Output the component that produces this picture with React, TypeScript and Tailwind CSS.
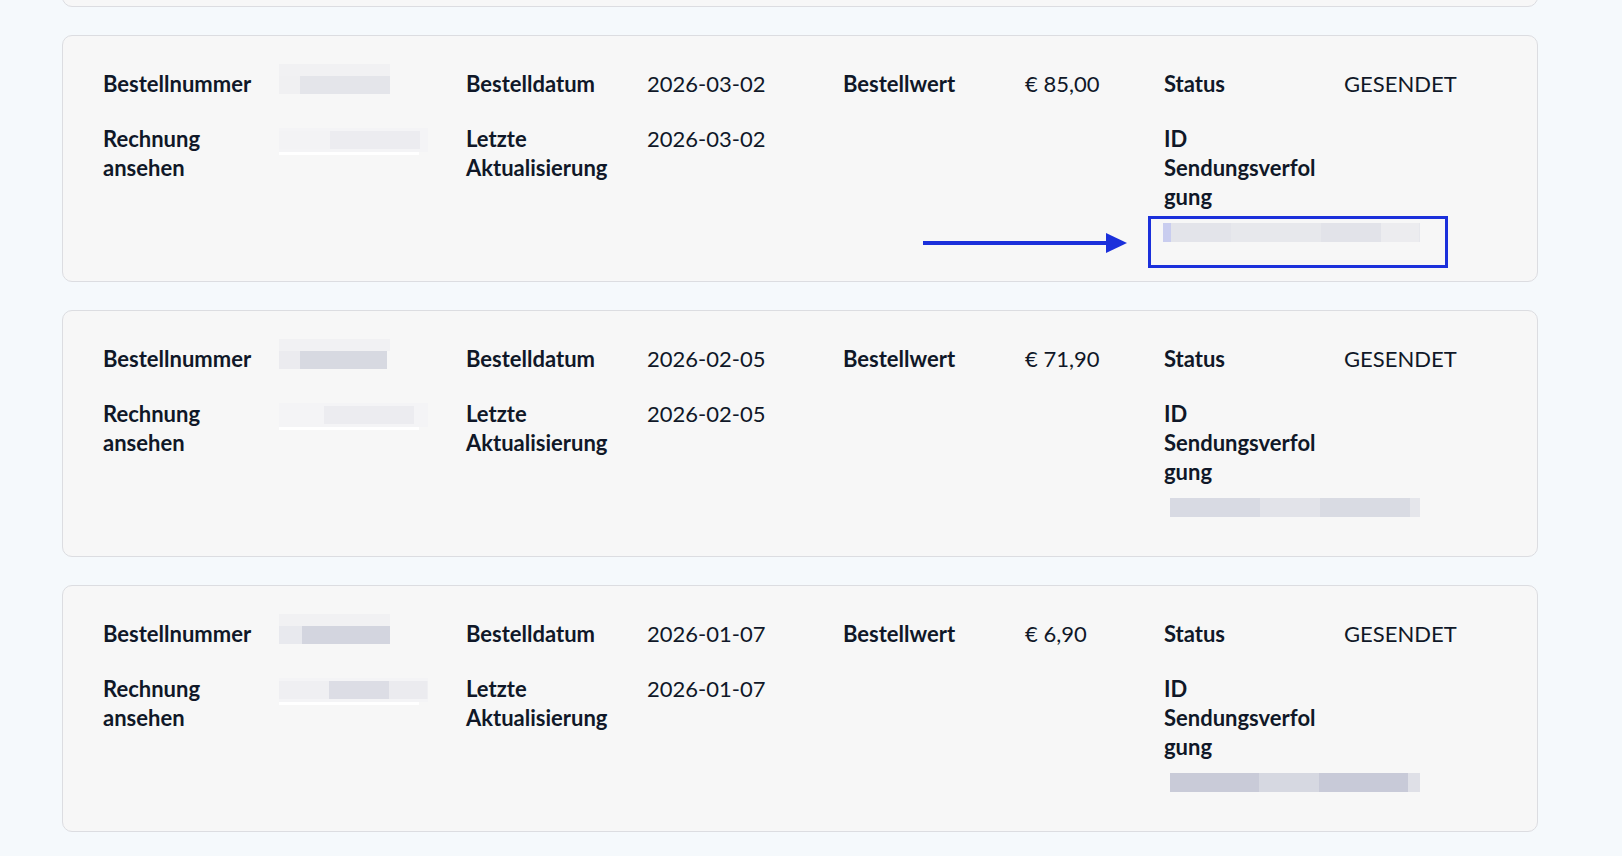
import React from 'react';

type Seg = { w: number; c: string };

type Order = {
  date: string;
  total: string;
  status: string;
  idSegs: Seg[];
  invSegs: Seg[];
  invBase: string;
  trackSegs: Seg[];
  highlight?: boolean;
};

const orders: Order[] = [
  {
    date: '2026-04-01',
    total: '€ 19,90',
    status: 'GESENDET',
    idSegs: [{ w: 21, c: '#efeff2' }, { w: 90, c: '#e4e5ea' }],
    invBase: '#f2f2f4',
    invSegs: [{ w: 51, c: '#f2f2f4' }, { w: 90, c: '#ebebef' }],
    trackSegs: [{ w: 250, c: '#e3e4ea' }],
  },
  {
    date: '2026-03-02',
    total: '€ 85,00',
    status: 'GESENDET',
    idSegs: [{ w: 21, c: '#f0f0f2' }, { w: 90, c: '#e4e5ea' }],
    invBase: '#f4f4f6',
    invSegs: [{ w: 51, c: '#f3f3f5' }, { w: 90, c: '#ececf0' }],
    trackSegs: [
      { w: 8, c: '#c9cdef' },
      { w: 60, c: '#e3e4ea' },
      { w: 90, c: '#e7e8ec' },
      { w: 60, c: '#e2e3e9' },
      { w: 38, c: '#ececef' },
    ],
    highlight: true,
  },
  {
    date: '2026-02-05',
    total: '€ 71,90',
    status: 'GESENDET',
    idSegs: [{ w: 21, c: '#ebebef' }, { w: 87, c: '#d7d9e1' }],
    invBase: '#f4f4f6',
    invSegs: [{ w: 45, c: '#f4f4f6' }, { w: 90, c: '#ececf0' }],
    trackSegs: [
      { w: 90, c: '#d8dae3' },
      { w: 60, c: '#e2e3e9' },
      { w: 90, c: '#d9dbe3' },
      { w: 10, c: '#e5e6eb' },
    ],
  },
  {
    date: '2026-01-07',
    total: '€ 6,90',
    status: 'GESENDET',
    idSegs: [{ w: 24, c: '#e8e9ee' }, { w: 90, c: '#d3d5df' }],
    invBase: '#efeff2',
    invSegs: [{ w: 50, c: '#efeff2' }, { w: 60, c: '#dcdde5' }, { w: 38, c: '#ebebef' }],
    trackSegs: [
      { w: 90, c: '#c9cbd8' },
      { w: 60, c: '#d6d8e1' },
      { w: 90, c: '#c8cad8' },
      { w: 12, c: '#dfe0e7' },
    ],
  },
];

// blurred placeholder for hidden values
function Blur({ segs, h, base }: { segs: Seg[]; h: number; base?: string }) {
  return (
    <div className="flex blur-[0.6px]" style={{ height: h, backgroundColor: base }}>
      {segs.map((s, i) => (
        <div key={i} className="h-full" style={{ width: s.w, backgroundColor: s.c }} />
      ))}
    </div>
  );
}

function OrderCard({ order }: { order: Order }) {
  return (
    <div className="relative h-[247px] shrink-0 rounded-[10px] border border-[#dcdde1] bg-[#f7f7f7] pl-[40px] pt-[33px]">
      <div className="grid grid-cols-[176px_187px_181px_196px_182px_139px_180px_1fr] gap-y-[26px]">
        {/* row 1 */}
        <div className="font-bold">Bestellnummer</div>
        <div className="-mt-[5px]">
          <div className="w-[111px]">
            <div className="h-[12px] w-[111px] bg-[#f1f1f3]" />
            <Blur segs={order.idSegs} h={18} />
          </div>
        </div>
        <div className="font-bold">Bestelldatum</div>
        <div>{order.date}</div>
        <div className="font-bold">Bestellwert</div>
        <div>{order.total}</div>
        <div className="font-bold">Status</div>
        <div>{order.status}</div>

        {/* row 2 */}
        <div className="pr-4 font-bold">Rechnung ansehen</div>
        <div className="pt-[4px]">
          <div className="w-[149px] bg-[#f4f4f6] py-[3px]">
            <Blur segs={order.invSegs} h={18} base={order.invBase} />
          </div>
          <div className="h-[3px] w-[140px] bg-white" />
        </div>
        <div className="pr-4 font-bold">Letzte Aktualisierung</div>
        <div>{order.date}</div>
        <div />
        <div />
        <div className="col-span-2">
          <div className="w-[160px] font-bold break-words">ID Sendungsverfolgung</div>
          <div className={order.highlight ? 'mt-[12px] -ml-[1px] w-[257px]' : 'mt-[12px] ml-[6px] w-[250px]'}>
            <Blur segs={order.trackSegs} h={19} base="#e6e7ec" />
          </div>
        </div>
      </div>

      {order.highlight && (
        <>
          <div className="absolute left-[1085px] top-[180px] h-[52px] w-[300px] border-[3px] border-[#1b30db]" />
          <div className="absolute left-[860px] top-[205px] h-[4px] w-[186px] bg-[#1b30db]" />
          <svg
            className="absolute left-[1043px] top-[197px]"
            width="21"
            height="20"
            viewBox="0 0 21 20"
          >
            <path d="M0 0 L21 10 L0 20 Z" fill="#1b30db" />
          </svg>
        </>
      )}
    </div>
  );
}

export default function App() {
  return (
    <div className="h-[856px] w-full overflow-hidden bg-[#f5f9fc] font-['Lato','Noto_Sans',sans-serif] text-[22px] leading-[29px] text-[#101828]">
      <div className="-mt-[240px] ml-[62px] flex w-[1476px] flex-col gap-[28px]">
        {orders.map((o, i) => (
          <OrderCard key={i} order={o} />
        ))}
      </div>
    </div>
  );
}
